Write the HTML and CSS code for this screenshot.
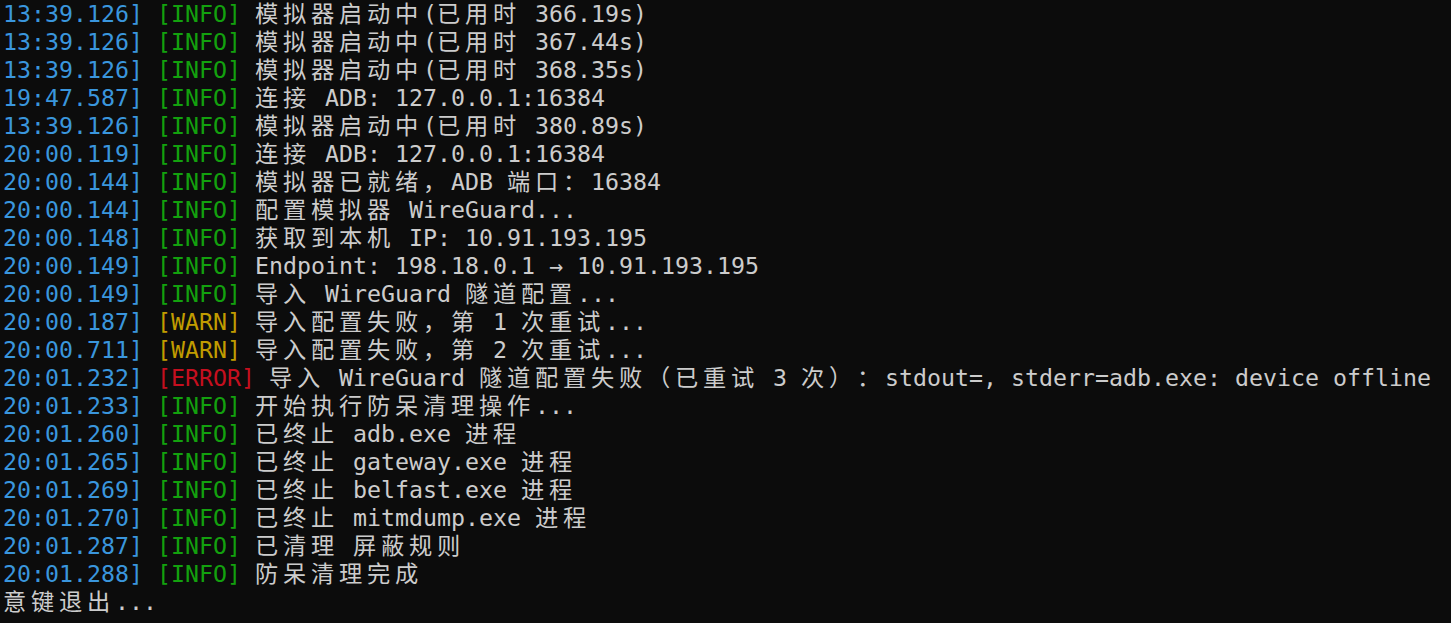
FILE: index.html
```html
<!DOCTYPE html>
<html lang="zh-CN">
<head>
<meta charset="utf-8">
<title>Terminal</title>
<link rel="stylesheet" href="styles.css">
</head>
<body>
<div class="term">
<div class="ln"><span class="ts">13:39.126]</span> <span class="info">[INFO]</span> <span class="w">模拟器启动中</span>(<span class="w">已用时</span> 366.19s)</div>
<div class="ln"><span class="ts">13:39.126]</span> <span class="info">[INFO]</span> <span class="w">模拟器启动中</span>(<span class="w">已用时</span> 367.44s)</div>
<div class="ln"><span class="ts">13:39.126]</span> <span class="info">[INFO]</span> <span class="w">模拟器启动中</span>(<span class="w">已用时</span> 368.35s)</div>
<div class="ln"><span class="ts">19:47.587]</span> <span class="info">[INFO]</span> <span class="w">连接</span> ADB: 127.0.0.1:16384</div>
<div class="ln"><span class="ts">13:39.126]</span> <span class="info">[INFO]</span> <span class="w">模拟器启动中</span>(<span class="w">已用时</span> 380.89s)</div>
<div class="ln"><span class="ts">20:00.119]</span> <span class="info">[INFO]</span> <span class="w">连接</span> ADB: 127.0.0.1:16384</div>
<div class="ln"><span class="ts">20:00.144]</span> <span class="info">[INFO]</span> <span class="w">模拟器已就绪，</span>ADB <span class="w">端口：</span>16384</div>
<div class="ln"><span class="ts">20:00.144]</span> <span class="info">[INFO]</span> <span class="w">配置模拟器</span> WireGuard...</div>
<div class="ln"><span class="ts">20:00.148]</span> <span class="info">[INFO]</span> <span class="w">获取到本机</span> IP: 10.91.193.195</div>
<div class="ln"><span class="ts">20:00.149]</span> <span class="info">[INFO]</span> Endpoint: 198.18.0.1 → 10.91.193.195</div>
<div class="ln"><span class="ts">20:00.149]</span> <span class="info">[INFO]</span> <span class="w">导入</span> WireGuard <span class="w">隧道配置</span>...</div>
<div class="ln"><span class="ts">20:00.187]</span> <span class="warn">[WARN]</span> <span class="w">导入配置失败，第</span> 1 <span class="w">次重试</span>...</div>
<div class="ln"><span class="ts">20:00.711]</span> <span class="warn">[WARN]</span> <span class="w">导入配置失败，第</span> 2 <span class="w">次重试</span>...</div>
<div class="ln"><span class="ts">20:01.232]</span> <span class="err">[ERROR]</span> <span class="w">导入</span> WireGuard <span class="w">隧道配置失败（已重试</span> 3 <span class="w">次）：</span>stdout=, stderr=adb.exe: device offline</div>
<div class="ln"><span class="ts">20:01.233]</span> <span class="info">[INFO]</span> <span class="w">开始执行防呆清理操作</span>...</div>
<div class="ln"><span class="ts">20:01.260]</span> <span class="info">[INFO]</span> <span class="w">已终止</span> adb.exe <span class="w">进程</span></div>
<div class="ln"><span class="ts">20:01.265]</span> <span class="info">[INFO]</span> <span class="w">已终止</span> gateway.exe <span class="w">进程</span></div>
<div class="ln"><span class="ts">20:01.269]</span> <span class="info">[INFO]</span> <span class="w">已终止</span> belfast.exe <span class="w">进程</span></div>
<div class="ln"><span class="ts">20:01.270]</span> <span class="info">[INFO]</span> <span class="w">已终止</span> mitmdump.exe <span class="w">进程</span></div>
<div class="ln"><span class="ts">20:01.287]</span> <span class="info">[INFO]</span> <span class="w">已清理</span> <span class="w">屏蔽规则</span></div>
<div class="ln"><span class="ts">20:01.288]</span> <span class="info">[INFO]</span> <span class="w">防呆清理完成</span></div>
<div class="ln"><span class="w">意键退出</span>...</div>
</div>
</body>
</html>
```
FILE: styles.css
```css
html, body {
  margin: 0;
  padding: 0;
  background: #0c0c0c;
  height: 100%;
  overflow: hidden;
}
.term {
  padding-left: 3px;
  color: #cccccc;
  font-family: "DejaVu Sans Mono", "Noto Sans CJK SC", monospace;
  font-size: 23.25px;
}
.ln {
  height: 28px;
  line-height: 28px;
  white-space: pre;
}
.ts { color: #3a96dd; }
.info { color: #13a10e; }
.warn { color: #c19c00; }
.err { color: #c50f1f; }
.w {
  font-family: "Noto Sans CJK SC", sans-serif;
  letter-spacing: 4.75px;
  line-height: 20px;
  text-spacing-trim: space-all;
  font-feature-settings: "halt" 0, "chws" 0, "palt" 0;
}
```
